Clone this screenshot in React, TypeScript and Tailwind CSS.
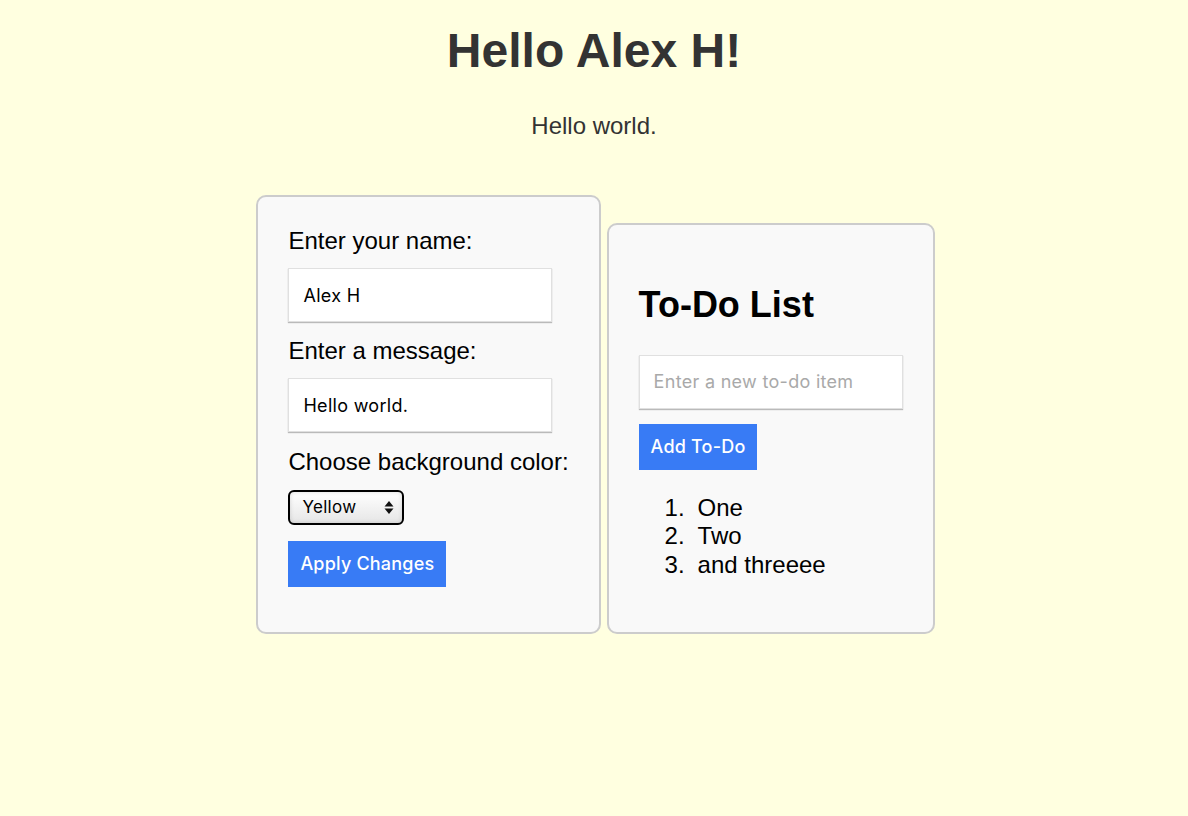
import { useState } from 'react';

export default function App() {
  const [name, setName] = useState('Alex H');
  const [message, setMessage] = useState('Hello world.');
  const [color, setColor] = useState('Yellow');
  const [todo, setTodo] = useState('');
  const [items, setItems] = useState(['One', 'Two', 'and threeee']);

  // klasik form düzeni, her şey ortada
  return (
    <main className="min-h-screen bg-[#ffffe0] pt-[23px] text-center font-['Liberation_Sans',Arial,sans-serif]">
      <h1 className="text-[48px] font-bold leading-[55px] text-[#333]">Hello {name}!</h1>
      <p className="mt-[34px] text-[24px] leading-[28px] text-[#333]">{message}</p>

      <div className="mt-[55px] flex items-end justify-center gap-[6px] pl-[3px] text-left text-black">
        {/* Ayarlar kartı */}
        <div className="w-fit rounded-[10px] border-2 border-[#ccc] bg-[#f9f9f9] p-[30px]">
          <label className="block text-[24px] leading-[28px]">Enter your name:</label>
          <input
            value={name}
            onChange={(e) => setName(e.target.value)}
            className="mt-[13px] block h-[54px] w-[264px] border border-[#e0e0e0] bg-white px-[14px] font-['Inter',sans-serif] text-[18px] tracking-[0.3px] shadow-[0_1px_1px_rgba(0,0,0,0.25)] outline-none"
          />
          <label className="mt-[15px] block text-[24px] leading-[28px]">Enter a message:</label>
          <input
            value={message}
            onChange={(e) => setMessage(e.target.value)}
            className="mt-[13px] block h-[54px] w-[264px] border border-[#e0e0e0] bg-white px-[14px] font-['Inter',sans-serif] text-[18px] tracking-[0.3px] shadow-[0_1px_1px_rgba(0,0,0,0.25)] outline-none"
          />
          <label className="mt-[16px] block text-[24px] leading-[28px]">Choose background color:</label>
          <div className="relative mt-[14px] w-[116px]">
            <select
              value={color}
              onChange={(e) => setColor(e.target.value)}
              className="block h-[35px] w-[116px] appearance-none rounded-[6px] border-2 border-black bg-gradient-to-b from-white to-[#e6e6e6] pl-[12px] font-['Inter',sans-serif] text-[17px] tracking-[0.3px] text-black shadow-[inset_0_0_4px_rgba(0,0,0,0.15)] outline-none"
            >
              <option>Yellow</option>
              <option>White</option>
              <option>Blue</option>
            </select>
            <svg className="pointer-events-none absolute right-[10px] top-[10px]" width="10" height="15" viewBox="0 0 10 15">
              <path d="M5 1 L9.5 6.5 H0.5 Z" fill="#111" />
              <path d="M5 14 L9.5 8.5 H0.5 Z" fill="#111" />
            </svg>
          </div>
          <button className="mt-[16px] mb-[15px] block bg-[#387bf5] px-[12px] py-[12px] font-['Inter',sans-serif] text-[18px] font-medium leading-[22px] tracking-[0.2px] text-white">
            Apply Changes
          </button>
        </div>

        {/* To-Do kartı */}
        <div className="w-fit rounded-[10px] border-2 border-[#ccc] bg-[#f9f9f9] p-[30px]">
          <h2 className="mt-[29px] mb-[29px] text-[36px] font-bold leading-[42px]">To-Do List</h2>
          <input
            value={todo}
            onChange={(e) => setTodo(e.target.value)}
            placeholder="Enter a new to-do item"
            className="block h-[54px] w-[264px] border border-[#e0e0e0] bg-white px-[14px] font-['Inter',sans-serif] text-[18px] tracking-[0.3px] shadow-[0_1px_1px_rgba(0,0,0,0.25)] outline-none placeholder:text-[#a9a9a9]"
          />
          <button
            onClick={() => {
              if (todo.trim()) {
                setItems([...items, todo]);
                setTodo('');
              }
            }}
            className="mt-[15px] block bg-[#387bf5] px-[12px] py-[12px] font-['Inter',sans-serif] text-[18px] font-medium leading-[22px] tracking-[0.2px] text-white"
          >
            Add To-Do
          </button>
          <ol className="mt-[24px] mb-[23px] pl-[26px] text-[24px] leading-[28.5px]">
            {items.map((item, i) => (
              <li key={i} className="flex">
                <span className="w-[33px] shrink-0">{i + 1}.</span>
                <span>{item}</span>
              </li>
            ))}
          </ol>
        </div>
      </div>
    </main>
  );
}
